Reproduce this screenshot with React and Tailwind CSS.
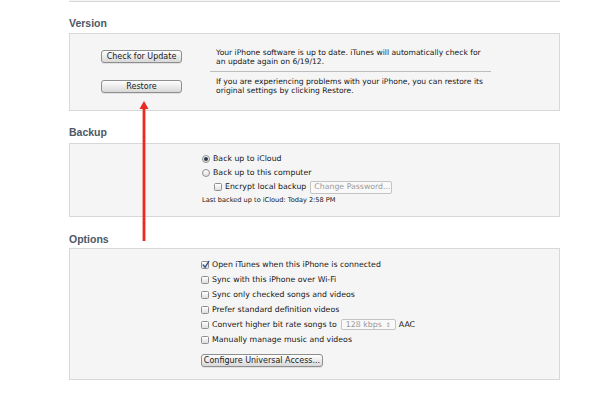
import React from "react";

const Button = ({ children, className = "" }) => (
  <div
    className={`flex items-center justify-center rounded-[3px] border border-[#8e8e8e] bg-gradient-to-b from-[#ffffff] to-[#d8d8d8] text-[8px] text-[#1a1a1a] shadow-[0_1px_0_rgba(0,0,0,0.08)] ${className}`}
  >
    {children}
  </div>
);

const Radio = ({ checked }) => (
  <span className="flex h-[8px] w-[8px] items-center justify-center rounded-full border border-[#8f8f8f] bg-gradient-to-b from-[#ffffff] to-[#dedede]">
    {checked && <span className="h-[4px] w-[4px] rounded-full bg-[#2f3a48]" />}
  </span>
);

const Check = ({ checked }) => (
  <span className="relative flex h-[8px] w-[8px] items-center justify-center rounded-[1.5px] border border-[#8f8f8f] bg-gradient-to-b from-[#ffffff] to-[#dedede]">
    {checked && (
      <svg viewBox="0 0 10 10" className="absolute -top-[1px] left-0 h-[8px] w-[8px] overflow-visible">
        <path d="M1.5 5 L3.8 8 L8.5 0.5" fill="none" stroke="#30568f" strokeWidth="1.7" strokeLinecap="round" strokeLinejoin="round" />
      </svg>
    )}
  </span>
);

const Heading = ({ children, className = "" }) => (
  <h2 className={`font-['Liberation_Sans',Arial,sans-serif] text-[10.5px] font-bold leading-[12px] text-[#4d5866] ${className}`}>
    {children}
  </h2>
);

const Panel = ({ children, className = "" }) => (
  <div className={`border border-[#d8d8d8] bg-[#f5f5f5] ${className}`}>{children}</div>
);

const options = [
  { label: "Open iTunes when this iPhone is connected", checked: true },
  { label: "Sync with this iPhone over Wi-Fi" },
  { label: "Sync only checked songs and videos" },
  { label: "Prefer standard definition videos" },
  { label: "convert" },
  { label: "Manually manage music and videos" },
];

export default function App() {
  return (
    <div className="relative h-[395px] w-[590px] overflow-hidden bg-white font-['DejaVu_Sans',Verdana,sans-serif] text-[#161616]">
      <div className="ml-[69px] w-[491px]">
        {/* bottom edge of the panel above */}
        <div className="h-[2px] border-b border-[#d8d8d8] bg-[#f5f5f5]" />

        {/* Version */}
        <Heading className="mt-[15px]">Version</Heading>
        <Panel className="mt-[4px] flex h-[78px]">
          <div className="flex w-[145px] flex-col gap-[17px] pl-[31px] pt-[16px]">
            <Button className="h-[13px] w-[81px]">Check for Update</Button>
            <Button className="h-[13px] w-[81px]">Restore</Button>
          </div>
          <div className="flex-1 pr-[68px] pt-[14px] text-[7.6px] leading-[9px]">
            <p className="pl-[1px]">
              Your iPhone software is up to date. iTunes will automatically check for
              <br />
              an update again on 6/19/12.
            </p>
            <div className="my-[5px] -ml-[5px] h-px bg-[#bdbdbd]" />
            <p className="pl-[1px]">
              If you are experiencing problems with your iPhone, you can restore its
              <br />
              original settings by clicking Restore.
            </p>
          </div>
        </Panel>

        {/* Backup */}
        <Heading className="mt-[15px]">Backup</Heading>
        <Panel className="mt-[5px] h-[74px] pl-[132px] pt-[8px] text-[7.8px]">
          <div className="flex h-[14px] items-center gap-[3px]">
            <Radio checked />
            <span>Back up to iCloud</span>
          </div>
          <div className="flex h-[14px] items-center gap-[3px]">
            <Radio />
            <span>Back up to this computer</span>
          </div>
          <div className="flex h-[14px] items-center gap-[3px] pl-[12px]">
            <Check />
            <span>Encrypt local backup</span>
            <span className="ml-[1px] flex h-[13px] w-[82px] items-center rounded-[2px] border border-[#c4c4c4] bg-[#f9f9f9] pl-[3px] text-[#9a9a9a]">
              Change Password...
            </span>
          </div>
          <div className="flex h-[14px] items-center text-[6.6px]">Last backed up to iCloud: Today 2:58 PM</div>
        </Panel>

        {/* Options */}
        <Heading className="mt-[16px]">Options</Heading>
        <Panel className="mt-[3px] h-[132px] pl-[131px] pt-[8px] text-[7.8px]">
          {options.map((o) => (
            <div key={o.label} className="flex h-[15px] items-center gap-[3px]">
              <Check checked={o.checked} />
              {o.label === "convert" ? (
                <>
                  <span>Convert higher bit rate songs to</span>
                  <span className="ml-[1px] flex h-[11px] w-[55px] items-center justify-between rounded-[2px] border border-[#c4c4c4] bg-[#f9f9f9] px-[4px] text-[#9a9a9a]">
                    <span>128 kbps</span>
                    <span className="text-[6px]">⇕</span>
                  </span>
                  <span>AAC</span>
                </>
              ) : (
                <span>{o.label}</span>
              )}
            </div>
          ))}
          <Button className="mt-[7px] h-[13px] w-[122px]">Configure Universal Access...</Button>
        </Panel>
      </div>

      {/* red arrow pointing to Restore */}
      <svg className="absolute left-[139px] top-[101px] h-[141px] w-[10px]" viewBox="0 0 10 141">
        <line x1="5" y1="6" x2="5" y2="140" stroke="#ea2a1e" strokeWidth="2.8" />
        <path d="M5 0 L9.5 8 L0.5 8 Z" fill="#ea2a1e" />
      </svg>
    </div>
  );
}
